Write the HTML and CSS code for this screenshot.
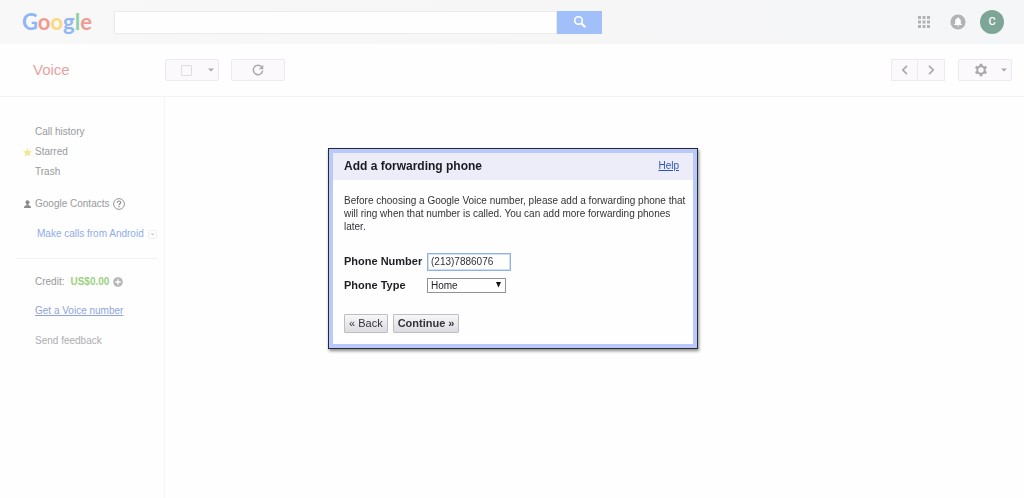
FILE: index.html
```html
<!DOCTYPE html>
<html lang="en">
<head>
<meta charset="utf-8">
<title>Google Voice</title>
<meta name="viewport" content="width=device-width, initial-scale=1">
<link rel="stylesheet" href="styles.css">
</head>
<body>
<header class="topbar">
  <a class="logo" href="#" aria-label="Google"><span class="blue">G</span><span class="red">o</span><span class="yellow">o</span><span class="blue">g</span><span class="green">l</span><span class="red">e</span></a>
  <form class="search">
    <input class="search-input" type="text" aria-label="Search">
    <button class="search-button" type="button" aria-label="Search">
      <svg width="14" height="14" viewBox="0 0 14 14" fill="none" stroke="#fff" stroke-width="1.600"><circle cx="5.500" cy="5.500" r="3.800"/><path d="M8.300 8.300l4 4" stroke-width="2"/></svg>
    </button>
  </form>
  <div class="account">
    <button class="plain" type="button" aria-label="Apps">
      <svg width="12" height="12" viewBox="0 0 12 12" fill="#b3b3b5"><path d="M0 0h3v3H0zM4.500 0h3v3h-3zM9 0h3v3H9zM0 4.500h3v3H0zM4.500 4.500h3v3h-3zM9 4.500h3v3H9zM0 9h3v3H0zM4.500 9h3v3h-3zM9 9h3v3H9z"/></svg>
    </button>
    <button class="plain" type="button" aria-label="Notifications">
      <svg width="16" height="16" viewBox="0 0 16 16"><circle cx="8" cy="8" r="7.600" fill="#b3b3b5"/><path d="M8 3.500c.6 0 .8.4.8.800 1.400.4 2 1.500 2 2.900v2.200l1 1.100v.5H4.200v-.5l1-1.100V7.200c0-1.400.6-2.500 2-2.900 0-.4.2-.8.800-.8zM7 11.500h2a1 1 0 0 1-2 0z" fill="#fff"/></svg>
    </button>
    <button class="avatar" type="button">C</button>
  </div>
</header>

<div class="toolbar">
  <h1 class="product">Voice</h1>
  <div class="tools">
    <div class="tool select-tool">
      <input class="select-all" type="checkbox" aria-label="Select all">
      <button class="plain menu-arrow" type="button" aria-label="Select menu"><svg width="6" height="4" viewBox="0 0 6 4"><path d="M0 .5h6l-3 3z" fill="#a9a9ab"/></svg></button>
    </div>
    <button class="tool" type="button" aria-label="Refresh">
      <svg width="12" height="12" viewBox="0 0 12 12"><path d="M10 3.400A4.700 4.700 0 1 0 10.700 6.600" fill="none" stroke="#a9a9ab" stroke-width="1.500"/><path d="M11.300.7v4.500H6.800z" fill="#a9a9ab"/></svg>
    </button>
  </div>
  <div class="tools right-tools">
    <div class="pager">
      <button class="page" type="button" aria-label="Previous"><svg width="8" height="10" viewBox="0 0 8 10"><path d="M6 .8L1.800 5 6 9.200" fill="none" stroke="#a9a9ab" stroke-width="1.700"/></svg></button>
      <button class="page" type="button" aria-label="Next"><svg width="8" height="10" viewBox="0 0 8 10"><path d="M2 .8L6.200 5 2 9.200" fill="none" stroke="#a9a9ab" stroke-width="1.700"/></svg></button>
    </div>
    <button class="tool settings" type="button" aria-label="Settings">
      <svg class="gear" width="14" height="14" viewBox="0 0 14 14"><g stroke="#a9a9ab" stroke-width="2.800"><path d="M7 .8v12.400M1.600 3.900l10.800 6.200M1.600 10.100l10.800-6.200"/></g><circle cx="7" cy="7" r="4.700" fill="#a9a9ab"/><circle cx="7" cy="7" r="2.700" fill="#fbf9fc"/></svg>
      <svg width="6" height="4" viewBox="0 0 6 4"><path d="M0 .5h6l-3 3z" fill="#a9a9ab"/></svg>
    </button>
  </div>
</div>

<div class="content">
  <nav class="sidebar">
    <ul class="folders">
      <li><a href="#">Call history</a></li>
      <li><svg class="lead" width="9" height="9" viewBox="0 0 10 10"><path d="M5 0l1.400 3.300 3.600.3-2.700 2.400.8 3.500L5 7.700 1.900 9.500l.8-3.500L0 3.600l3.600-.3z" fill="#f3e795"/></svg><a href="#">Starred</a></li>
      <li><a href="#">Trash</a></li>
    </ul>
    <div class="contacts">
      <svg class="lead" width="9" height="9" viewBox="0 0 9 9" fill="#8b8b8e"><circle cx="4.500" cy="2.200" r="2"/><path d="M3.500 4h2v1.200c1.600.2 2.500.9 2.500 2.800H1c0-1.900.9-2.600 2.500-2.800z"/></svg>
      <a href="#">Google Contacts</a>
      <button class="plain" type="button" aria-label="About contacts"><svg width="12" height="12" viewBox="0 0 12 12" fill="none" stroke="#8b8b8e"><circle cx="6" cy="6" r="5.400" stroke-width=".9"/><path d="M4.300 4.800C4.300 2.400 7.700 2.500 7.700 4.500 7.700 5.700 6 5.700 6 7.200M6 8v1.200" stroke-width="1.200"/></svg></button>
    </div>
    <div class="android">
      <a href="#">Make calls from Android</a>
      <button class="plain" type="button" aria-label="Call options"><svg width="9" height="9" viewBox="0 0 9 9"><rect x=".5" y=".5" width="8" height="8" rx="1" fill="none" stroke="#f0eef2"/><path d="M2.500 3.500h4l-2 2z" fill="#c9c9cc"/></svg></button>
    </div>
    <div class="credit">
      <span>Credit:</span> <strong>US$0.00</strong>
      <button class="plain" type="button" aria-label="Add credit"><svg width="10" height="10" viewBox="0 0 10 10"><circle cx="5" cy="5" r="4.800" fill="#b4b4b6"/><path d="M5 2.200v5.600M2.200 5h5.600" stroke="#fff" stroke-width="1.400"/></svg></button>
    </div>
    <a class="get-number" href="#">Get a Voice number</a>
    <a class="feedback" href="#">Send feedback</a>
  </nav>
  <main class="inbox"></main>
</div>

<div class="overlay">
  <form class="dialog" role="dialog" aria-labelledby="dialog-title">
    <div class="dialog-head">
      <h2 class="dialog-title" id="dialog-title">Add a forwarding phone</h2>
      <a class="help" href="#">Help</a>
    </div>
    <div class="dialog-body">
      <p class="intro">Before choosing a Google Voice number, please add a forwarding phone that will ring when that number is called. You can add more forwarding phones later.</p>
      <div class="fields">
        <label for="phone">Phone Number</label>
        <input class="phone" id="phone" type="text" value="(213)7886076">
        <label for="type">Phone Type</label>
        <div class="select-wrap">
          <select class="type" id="type"><option>Home</option><option>Mobile</option><option>Work</option></select>
          <svg class="select-arrow" width="5" height="6" viewBox="0 0 5 6"><path d="M0 0h5L2.500 5.500z" fill="#111"/></svg>
        </div>
      </div>
      <div class="actions">
        <button class="action" type="button">« Back</button>
        <button class="action primary" type="button">Continue »</button>
      </div>
    </div>
  </form>
</div>
</body>
</html>
```
FILE: styles.css
```css
* { box-sizing: border-box; }

body {
  margin: 0;
  min-height: 100vh;
  display: flex;
  flex-direction: column;
  background: #fefefe;
  color: #99999c;
  font: 10px/20px "Liberation Sans", Arial, sans-serif;
}

a { color: inherit; text-decoration: none; }
svg { display: block; flex: none; }
button, input, select { font: inherit; color: inherit; margin: 0; }
.plain { padding: 0; border: 0; background: none; }

.topbar {
  display: flex;
  align-items: center;
  height: 44px;
  padding: 0 20px 0 22px;
  background: linear-gradient(90deg, #f8f8f8, #f6f6f7 50%, #f5f6f8);
}
.logo { flex: 0 0 92px; font: 700 22px/28px Lato, sans-serif; }
.blue { color: #8fb6f6; }
.red { color: #f19a93; }
.yellow { color: #fbd980; }
.green { color: #92cfa3; }

.search { display: flex; flex: 0 1 488px; height: 23px; }
.search-input {
  flex: 1;
  min-width: 0;
  padding: 0 8px;
  border: 1px solid #ebebed;
  background: #fefefe;
}
.search-button {
  display: grid;
  place-items: center;
  width: 45px;
  padding: 0;
  border: 0;
  background: #a1c0fa;
}
.account { display: flex; align-items: center; gap: 20px; margin-left: auto; }
.avatar {
  width: 24px;
  height: 24px;
  margin-left: -6px;
  padding: 0;
  border: 0;
  border-radius: 50%;
  background: #7da697;
  color: #fff;
  font: 500 11px/24px Roboto, sans-serif;
}

.toolbar {
  display: flex;
  align-items: center;
  height: 53px;
  padding: 0 12px 0 33px;
  border-bottom: 1px solid #f2f1f3;
}
.product { flex: 0 0 132px; margin: 0; color: #e5a4a0; font-size: 15px; font-weight: 400; }
.tools { display: flex; gap: 12px; }
.right-tools { gap: 13px; margin-left: auto; }
.tool {
  display: flex;
  align-items: center;
  justify-content: center;
  width: 54px;
  height: 22px;
  padding: 0;
  border: 1px solid #eceaef;
  border-radius: 2px;
  background: #fbf9fc;
}
.select-tool { justify-content: space-between; padding: 0 4px 0 15px; }
.select-all {
  appearance: none;
  width: 11px;
  height: 11px;
  border: 1px solid #dddce0;
  border-radius: 1px;
}
.settings { justify-content: space-between; padding: 0 4px 0 15px; }
.pager { display: flex; }
.page {
  display: grid;
  place-items: center;
  width: 27px;
  height: 22px;
  padding: 0;
  border: 1px solid #eceaef;
  background: #fbf9fc;
}
.page + .page { border-left: 0; }

.content { display: flex; flex: 1; }
.sidebar {
  display: flex;
  flex-direction: column;
  align-items: flex-start;
  width: 165px;
  padding: 25px 7px 0 15px;
  border-right: 1px solid #f6f3f7;
  white-space: nowrap;
}
.folders { margin: 0; padding: 0 0 0 20px; list-style: none; }
.folders li, .contacts, .android, .credit { display: flex; align-items: center; }
.contacts { gap: 3px; margin: 12px 0 0 20px; }
.lead { margin-left: -12px; margin-right: 3px; }
.contacts .lead { margin-right: 0; }
.android {
  align-self: stretch;
  justify-content: space-between;
  padding: 10px 0 14px 22px;
  border-bottom: 1px solid #f2f0f4;
  color: #8fadea;
}
.credit { gap: 6px; margin: 13px 0 0 20px; }
.credit strong { color: #9bd17f; }
.credit .plain { margin-left: -2px; }
.get-number { margin: 9px 0 0 20px; color: #8fa4dc; text-decoration: underline; }
.feedback { margin: 10px 0 0 20px; color: #adadb0; }
.inbox { flex: 1; }

.overlay {
  position: fixed;
  inset: 0;
  display: flex;
  align-items: center;
  justify-content: center;
  padding: 0 0 2px 2px;
}
.dialog {
  width: 370px;
  max-width: 100%;
  border: 1px solid #272a35;
  background: #fefefe;
  box-shadow: inset 0 0 0 4px #b9c9fa, 1px 2px 3px #0007;
  padding: 4px;
  color: #333338;
}
.dialog-head {
  display: flex;
  align-items: center;
  justify-content: space-between;
  height: 27px;
  padding: 0 14px 0 11px;
  background: #ecedf8;
}
.dialog-title { margin: 0; color: #1b1b21; font-size: 12px; }
.help { color: #2d56b8; text-decoration: underline; }
.dialog-body { padding: 14px 4px 11px 11px; }
.intro { margin: 0 0 20px; line-height: 13px; }
.fields {
  display: grid;
  grid-template-columns: 77px 1fr;
  gap: 7px 6px;
  align-items: center;
  color: #1f1f25;
}
.fields label { font-size: 11px; font-weight: 700; line-height: 15px; white-space: nowrap; }
.phone {
  width: 84px;
  height: 18px;
  padding: 0 3px;
  border: 1px solid #91b2e6;
  outline: 1px solid #cfdff8;
  outline-offset: -2px;
  background: #fefefe;
  color: #333338;
}
.select-wrap { position: relative; width: 79px; height: 15px; }
.type {
  display: block;
  appearance: none;
  width: 100%;
  height: 15px;
  padding: 0 3px;
  border: 1px solid #929296;
  border-radius: 0;
  background: #fefefe;
  line-height: 13px;
}
.select-arrow { position: absolute; right: 5px; top: 4px; pointer-events: none; }
.actions { display: flex; gap: 5px; margin-top: 21px; }
.action {
  height: 19px;
  padding: 0 4px;
  border: 1px solid #bdbdc2;
  border-radius: 1px;
  background: linear-gradient(#f7f7f9, #dcdce1);
  font-size: 11px;
  line-height: 15px;
}
.primary { font-weight: 700; }
```
